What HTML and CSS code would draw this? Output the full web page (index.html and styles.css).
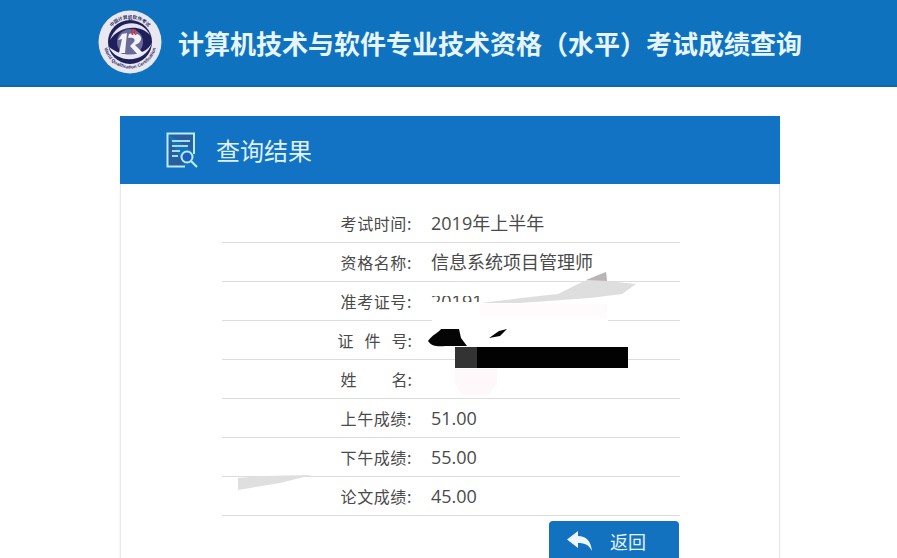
FILE: index.html
```html
<!DOCTYPE html>
<html lang="zh-CN">
<head>
<meta charset="utf-8">
<title>考试成绩查询</title>
<link rel="stylesheet" href="styles.css">
</head>
<body>
<header class="site-header">
  <svg class="logo" viewBox="0 0 64 64" width="64" height="64" aria-label="logo">
    <defs>
      <path id="arc-top" d="M8.500 32a23.500 23.500 0 0 1 47 0"/>
      <path id="arc-bottom" d="M5.500 32a26.500 26.500 0 0 0 53 0"/>
    </defs>
    <circle cx="32" cy="32" r="31.500" fill="#e9e8f0"/>
    <circle cx="32" cy="32" r="22" fill="#1f1f5c"/>
    <circle cx="32" cy="32" r="13" fill="#6a6a98"/>
    <path d="M11 37C17 52 46 56 54 33C47 46 26 49 11 37Z" fill="#e8e8f2"/>
    <path d="M52 25C44 8 19 9 12 30C20 17 41 13 52 25Z" fill="#e3e4f0"/>
    <path d="M24 24L29 23L27 43H21L24 29L20 30Z" fill="#f2f2f8"/>
    <path d="M31 24C42 22 46 28 41 33L37 35L45 43L40 45L32 36L36 32C38 29 35 27 30 28Z" fill="#f2f2f8"/>
    <text x="33" y="25" class="logo-r">R</text>
    <text class="logo-text"><textPath href="#arc-top" startOffset="50%" text-anchor="middle">中国计算机软件考试</textPath></text>
    <text class="logo-text"><textPath href="#arc-bottom" startOffset="50%" text-anchor="middle">World Qualification Certification</textPath></text>
  </svg>
  <h1 class="site-title">计算机技术与软件专业技术资格（水平）考试成绩查询</h1>
</header>

<main class="panel">
  <div class="panel-head">
    <svg class="panel-icon" viewBox="0 0 32 36" width="32" height="36" aria-hidden="true">
      <path d="M1 1H29V21M19 35H1V1" fill="#28609f"/>
      <path d="M28 22V1.500H1.500V34.500H19" fill="none" stroke="#b9ecf5" stroke-width="2"/>
      <path d="M6 9H24M6 14H22M6 19H14M6 24H12" stroke="#a9dcef" stroke-width="1.800" fill="none"/>
      <circle cx="21" cy="25" r="5.500" fill="#1d5fc0" stroke="#b9ecf5" stroke-width="2"/>
      <path d="M25 29L31 35" stroke="#b9ecf5" stroke-width="2.200"/>
    </svg>
    <h2 class="panel-title">查询结果</h2>
  </div>
  <div class="panel-body">
    <div class="row"><span class="label">考试时间:</span><span class="value">2019年上半年</span></div>
    <div class="row"><span class="label">资格名称:</span><span class="value">信息系统项目管理师</span></div>
    <div class="row"><span class="label">准考证号:</span><span class="value">20191</span></div>
    <div class="row"><span class="label label-spaced"><span>证</span><span>件</span><span>号:</span></span><span class="value"></span></div>
    <div class="row"><span class="label label-wide"><span>姓</span><span>名:</span></span><span class="value"></span></div>
    <div class="row"><span class="label">上午成绩:</span><span class="value">51.00</span></div>
    <div class="row"><span class="label">下午成绩:</span><span class="value">55.00</span></div>
    <div class="row"><span class="label">论文成绩:</span><span class="value">45.00</span></div>
    <div class="actions">
      <button class="back-btn" type="button">
        <svg class="back-icon" viewBox="0 0 25 20" width="25" height="20" aria-hidden="true">
          <path d="M0 8.500L11 0V5C19 5 24 10 25 20C22 14 18 12 11 12V17Z" fill="#eef5fb"/>
        </svg>
        <span>返回</span>
      </button>
    </div>
  </div>
</main>

<svg class="redactions" viewBox="0 0 897 558" width="897" height="558" aria-hidden="true">
  <rect x="428" y="283" width="180" height="13" fill="#fff"/>
  <rect x="428" y="302" width="180" height="17" fill="#fff"/>
  <rect x="432" y="318" width="176" height="4" fill="#fff"/>
  <rect x="480" y="304" width="127" height="14" fill="#fffbfc"/>
  <path d="M480 303L530 297L558 294L578 284L592 278L606 272L607 281L636 284L622 294L590 298L520 303Z" fill="#dedede"/>
  <path d="M586 280L606 272L607 281Z" fill="#b9b5b5"/>
  <path d="M428 341C432 335 438 333 441 329H459L461 338L467 346H445C438 347 431 346 428 341Z" fill="#050505"/>
  <path d="M489 338L499 331L507 329L500 336Z" fill="#050505"/>
  <rect x="455" y="347" width="173" height="21" fill="#020202"/>
  <rect x="455" y="347" width="22" height="21" fill="#333"/>
  <path d="M455 369H497V384L488 395H462L455 385Z" fill="#fff8fb"/>
  <path d="M238 478L262 476L312 475L280 483L238 490Z" fill="#dfdfdf"/>
</svg>
</body>
</html>
```
FILE: styles.css
```css
html, body {
  margin: 0;
  height: 558px;
  overflow: hidden;
  background: #fff;
}

body {
  position: relative;
  font-family: "Noto Sans CJK SC", "Liberation Sans", sans-serif;
  color: #444;
}

.site-header {
  height: 85px;
  padding-left: 98px;
  display: flex;
  align-items: center;
  gap: 16px;
  background: #0f72bf;
  border-bottom: 2px solid #0f6a9f;
}

.logo {
  flex: none;
  margin-top: -2px;
}

.logo-text {
  font-family: "Liberation Sans", "Noto Sans CJK SC", sans-serif;
  font-size: 4.600px;
  font-weight: 700;
  fill: #2d2d66;
}

.logo-r {
  font-family: "Liberation Serif", serif;
  font-size: 8px;
  font-weight: 700;
  fill: #d8343a;
}

.site-title {
  margin: 0;
  font-size: 26px;
  font-weight: 700;
  line-height: 1;
  color: #e6f5fb;
  white-space: nowrap;
}

.panel {
  width: 658px;
  margin: 29px 0 0 120px;
  border: 1px solid #e8e8e8;
  border-top: 0;
  box-shadow: 0 0 3px #f2f2f2;
}

.panel-head {
  height: 68px;
  margin: 0 -1px;
  padding-left: 46px;
  display: flex;
  align-items: center;
  gap: 18px;
  background: #1272c3;
}

.panel-icon {
  flex: none;
}

.panel-title {
  margin: 0;
  font-size: 24px;
  font-weight: 400;
  line-height: 1;
  color: #dff1f7;
}

.panel-body {
  padding: 20px 99px 0 101px;
}

.row {
  height: 37px;
  padding-bottom: 1px;
  display: grid;
  grid-template-columns: 190px 1fr;
  column-gap: 19px;
  align-items: center;
  border-bottom: 1px solid #dcdcdc;
}

.label {
  font-size: 16px;
  line-height: 1;
  letter-spacing: 0.6px;
  text-align: right;
  color: #4a4a4a;
}

.label-spaced {
  display: flex;
  justify-content: flex-end;
  gap: 11px;
  letter-spacing: 0;
}

.label-wide {
  display: flex;
  justify-content: flex-end;
  gap: 35px;
  letter-spacing: 0;
}

.value {
  font-family: "Open Sans", "Noto Sans CJK SC", sans-serif;
  font-size: 18px;
  line-height: 1;
  color: #4a4a4a;
}

.actions {
  display: flex;
  justify-content: flex-end;
  padding: 5px 1px 0 0;
}

.back-btn {
  width: 130px;
  height: 40px;
  padding: 0 0 0 18px;
  display: flex;
  align-items: center;
  gap: 18px;
  border: 0;
  border-radius: 4px;
  background: #1272c0;
  color: #e4f2fa;
  font-family: inherit;
  font-size: 18px;
  line-height: 1;
}

.back-icon {
  flex: none;
}

.redactions {
  position: absolute;
  left: 0;
  top: 0;
  pointer-events: none;
}
```
